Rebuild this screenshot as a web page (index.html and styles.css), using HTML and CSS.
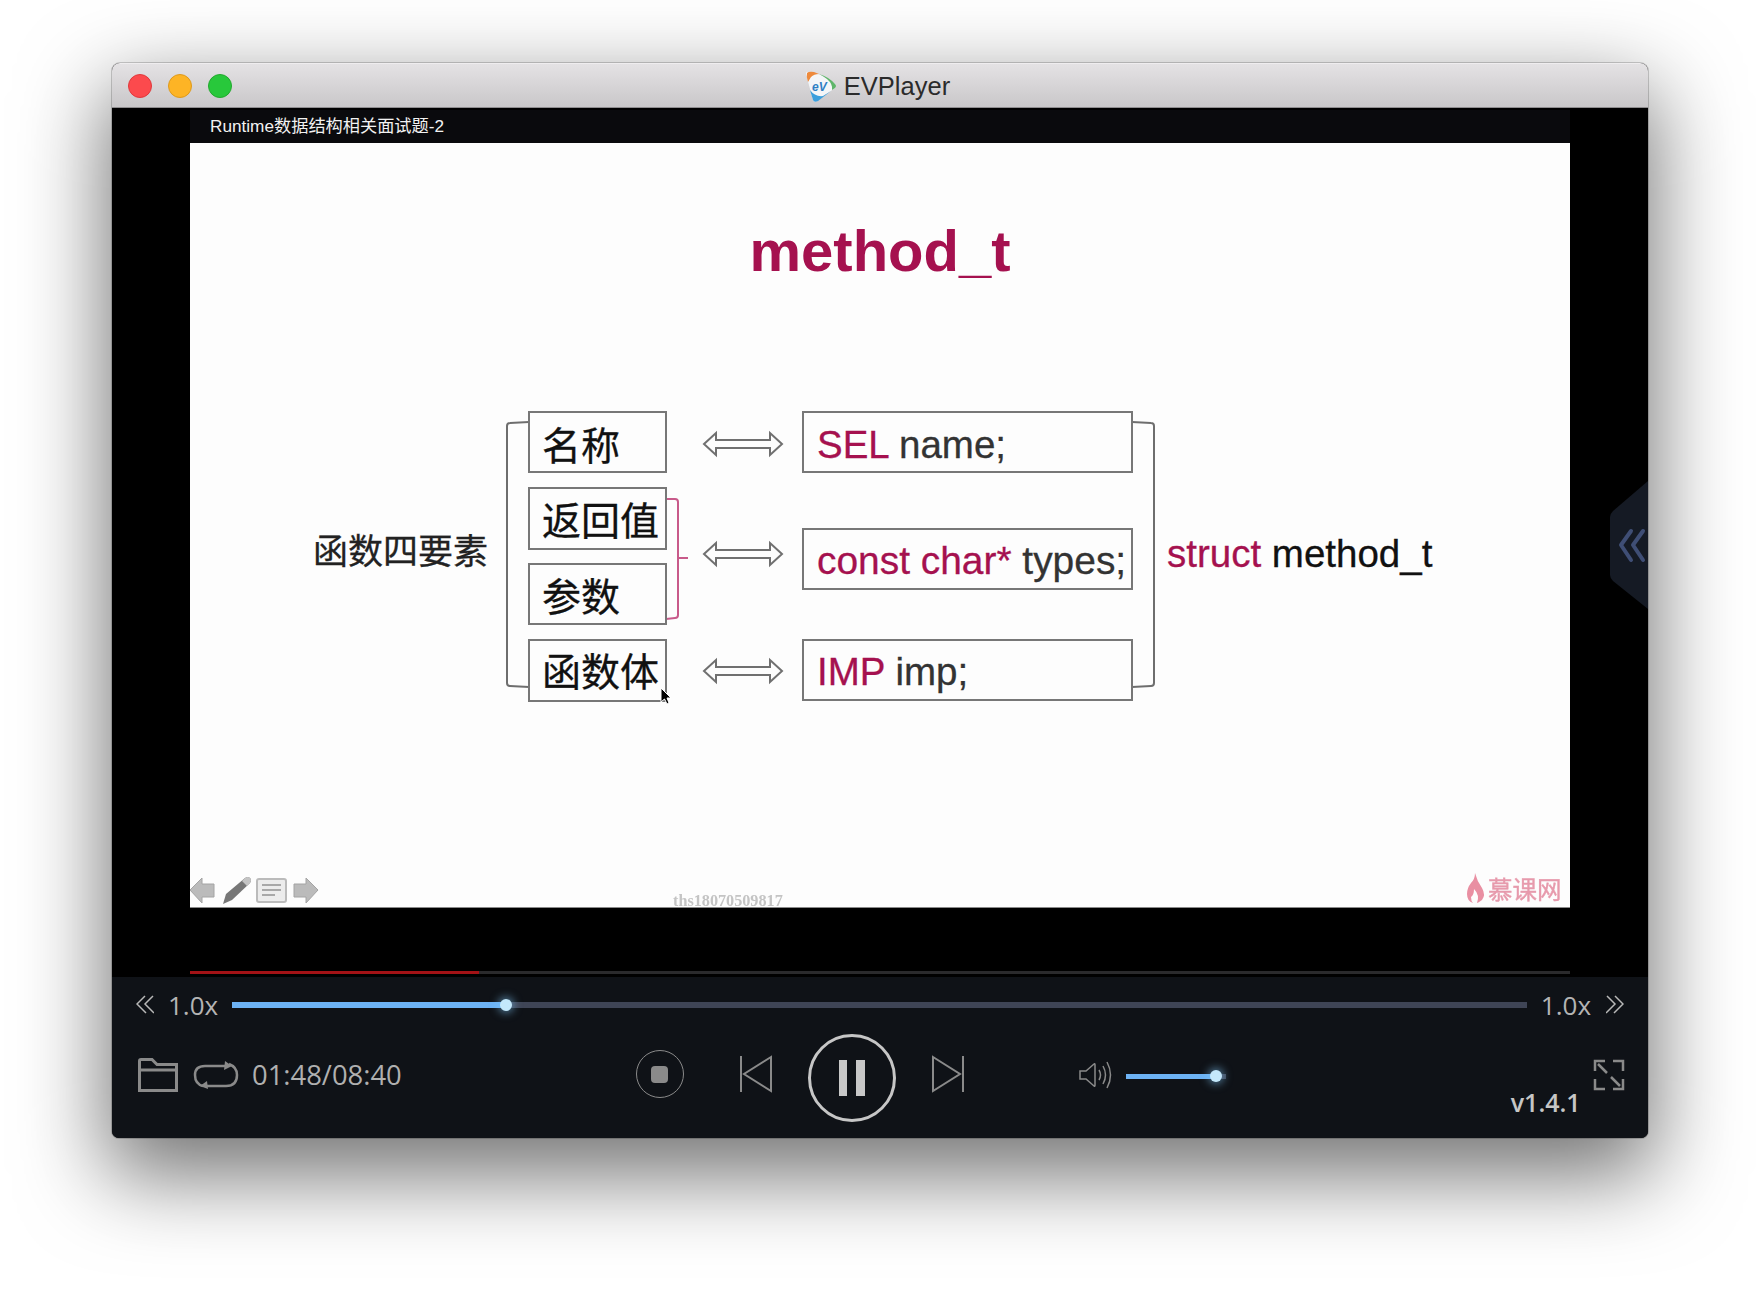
FILE: index.html
```html
<!DOCTYPE html>
<html>

<head>
	<meta charset="UTF-8" />
	<title>EVPlayer</title>
	<link rel="stylesheet" href="styles.css">
</head>

<body>
	<div class="window">

		<!-- title bar -->
		<div class="titlebar">
			<div class="lights">
				<span class="light red"></span>
				<span class="light yellow"></span>
				<span class="light green"></span>
			</div>
			<div class="app-name">
				<svg class="app-logo" width="32" height="33" viewBox="0 0 32 33">
					<path d="M3 2 Q1 1 1 4 L8 30 Q9 33 12 31 L30 18 Q32 16 30 14 Q18 3 3 2 Z" fill="#f4f6f8" />
					<path d="M2 3 Q1 7 3 12 L6 7 Q9 4 14 4 L9 2 Q4 1 2 3 Z" fill="#ee8a3c" />
					<path d="M14 4 Q24 7 30 14 Q32 16 30 18 L27 20 Q28 14 22 9 Q18 6 14 4 Z" fill="#5fb56a" />
					<path d="M8 30 L5 20 Q10 27 18 26 L26 21 L13 31 Q9 33 8 30 Z" fill="#3b9fdc" />
					<text class="logo-text" x="7" y="21">eV</text>
				</svg>
				<span>EVPlayer</span>
			</div>
		</div>

		<!-- video area -->
		<div class="video">
			<div class="lesson-title">Runtime数据结构相关面试题-2</div>
			<div class="slide">
				<h1 class="slide-title">method_t</h1>
				<svg class="diagram" width="1380" height="765" viewBox="0 0 1380 765">
					<!-- left brace -->
					<path class="line" d="M339 279 L320 280 Q317 280 317 283 L317 540 Q317 543 320 543 L339 544" />
					<path class="line pink" d="M476 356 L485 356 Q488 356 488 359 L488 472 Q488 475 485 475 L476 476 M488 415 L498 415" />
					<!-- right brace -->
					<path class="line" d="M942 279 L961 280 Q964 280 964 283 L964 540 Q964 543 961 543 L942 544" />

					<rect class="box" x="339" y="269" width="137" height="60" />
					<rect class="box" x="339" y="345" width="137" height="61" />
					<rect class="box" x="339" y="421" width="137" height="60" />
					<rect class="box" x="339" y="497" width="137" height="61" />
					<rect class="box" x="613" y="269" width="329" height="60" />
					<rect class="box" x="613" y="386" width="329" height="60" />
					<rect class="box" x="613" y="497" width="329" height="60" />

					<text class="cn small" x="123" y="421">函数四要素</text>
					<text class="cn" x="352" y="317">名称</text>
					<text class="cn" x="352" y="392">返回值</text>
					<text class="cn" x="352" y="468">参数</text>
					<text class="cn" x="352" y="543">函数体</text>

					<path class="arrow" d="M514 301 L526 290 L526 297 L580 297 L580 290 L592 301 L580 312 L580 305 L526 305 L526 312 Z" />
					<path class="arrow" d="M514 411 L526 400 L526 407 L580 407 L580 400 L592 411 L580 422 L580 415 L526 415 L526 422 Z" />
					<path class="arrow" d="M514 528 L526 517 L526 524 L580 524 L580 517 L592 528 L580 539 L580 532 L526 532 L526 539 Z" />

					<text class="code" x="627" y="315"><tspan class="kw">SEL</tspan> name;</text>
					<text class="code wide" x="627" y="431"><tspan class="kw">const char*</tspan> types;</text>
					<text class="code" x="627" y="542"><tspan class="kw">IMP</tspan> imp;</text>
					<text class="code dark" x="977" y="424"><tspan class="kw">struct</tspan> method_t</text>

					<!-- mouse pointer -->
					<path class="pointer" d="M471 545 L471 559 L474.500 556 L477 561 L479 560 L477 555 L481 555 Z" />

					<!-- slide player buttons -->
					<path class="tool" d="M0 747 L12 735 L12 741 L24 741 L24 754 L12 754 L12 760 Z" />
					<path class="pen" d="M33 761 L36 751 L55 735 Q58 733 60 735 Q62 737 60 740 L42 757 Z" />
					<path class="pen-tip" d="M55 735 Q58 733 60 735 Q62 737 60 740 L57 743 L52 738 Z" />
					<rect class="doc" x="67" y="736" width="29" height="23" rx="2" />
					<path class="doc-lines" d="M72 742 L91 742 M72 747 L91 747 M72 752 L85 752" />
					<path class="tool" d="M128 747 L116 735 L116 741 L104 741 L104 754 L116 754 L116 760 Z" />

					<text class="watermark" x="483" y="763">ths18070509817</text>

					<path class="flame" d="M1285 730 Q1287 738 1292 745 Q1296 752 1292 757 Q1288 760 1287 760 Q1290 752 1284 746 Q1284 752 1281 754 Q1281 758 1283 760 Q1277 758 1277 751 Q1277 745 1281 740 Q1285 736 1285 730 Z" />
					<text class="brand" x="1298" y="756">慕课网</text>
				</svg>
			</div>
			<div class="progress"><div class="progress-done" style="width: 289px"></div></div>

			<!-- collapsed playlist tab -->
			<svg class="side-tab" width="38" height="128" viewBox="0 0 38 128">
				<path d="M38 0 L38 128 L3 100 Q0 97 0 94 L0 36 Q0 33 3 30 Z" fill="#151a24" />
				<path d="M21 50 L11 64 L21 79 M33 50 L23 64 L33 79" fill="none" stroke="#3f4e75" stroke-width="4" stroke-linecap="round" stroke-linejoin="round" />
			</svg>
		</div>

		<!-- controls -->
		<div class="controls">
			<div class="speed-row">
				<svg class="chevrons" width="18" height="20" viewBox="0 0 18 20">
					<path d="M9 1 L1 9 L10 18 M17 1 L9 9 L18 18" />
				</svg>
				<span class="speed left">1.0x</span>
				<div class="seek">
					<div class="seek-fill" style="width: 274px"><span class="knob"></span></div>
				</div>
				<span class="speed right">1.0x</span>
				<svg class="chevrons" width="18" height="20" viewBox="0 0 18 20">
					<path d="M1 1 L9 9 L0 18 M9 1 L17 9 L8 18" />
				</svg>
			</div>

			<div class="button-row">
				<svg class="icon folder" width="40" height="34" viewBox="0 0 40 34">
					<path d="M1.500 32.500 L1.500 3 Q1.500 1.500 3 1.500 L14 1.500 L19 6.500 L38.500 6.500 L38.500 32.500 Z M1.500 12 L38.500 12" />
				</svg>
				<svg class="icon loop" width="44" height="28" viewBox="0 0 44 28">
					<path d="M9 25 Q1 23 1 14 Q1 5 11 5 L31 5 M35 3 Q43 6 43 14 Q43 25 32 25 L13 25" />
					<path class="solid" d="M31 0 L38 5 L30 9 Z M13 20 L6 25 L14 28 Z" />
				</svg>
				<span class="time">01:48/08:40</span>

				<button class="stop"><span class="stop-square"></span></button>
				<svg class="icon prev" width="32" height="36" viewBox="0 0 32 36">
					<path d="M1 0 L1 36 M31 1 L4 18 L31 35 Z" />
				</svg>
				<button class="pause"><span class="pause-bar"></span><span class="pause-bar"></span></button>
				<svg class="icon next" width="32" height="36" viewBox="0 0 32 36">
					<path d="M31 0 L31 36 M1 1 L28 18 L1 35 Z" />
				</svg>

				<svg class="icon speaker" width="33" height="28" viewBox="0 0 33 28">
					<path d="M1 10 L7 10 L15 3 Q16 2 16 4 L16 24 Q16 26 15 25 L7 18 L1 18 Z M20 9 Q23 14 20 19 M24 5 Q29 14 24 23 M28 1 Q35 14 28 27" />
				</svg>
				<div class="volume">
					<div class="volume-fill" style="width: 90px"><span class="knob"></span></div>
				</div>

				<span class="version">v1.4.1</span>
				<svg class="icon fullscreen" width="30" height="30" viewBox="0 0 30 30">
					<path d="M1 11 L1 1 L11 1 M19 1 L29 1 L29 11 M1 19 L1 29 L11 29 M29 19 L29 29 L19 29 M4 4 L13 13 M26 26 L17 17" />
				</svg>
			</div>
		</div>
	</div>
</body>

</html>
```

FILE: styles.css
```css
* {
	box-sizing: border-box;
}

html,
body {
	margin: 0;
	height: 1298px;
	overflow: hidden;
	background: #fff;
}

body {
	padding: 63px 112px 0;
	font-family: "Liberation Sans", "Noto Sans CJK SC", sans-serif;
}

.window {
	display: flex;
	flex-direction: column;
	width: 1536px;
	height: 1075px;
	border-radius: 8px 8px 7px 7px;
	background: #000;
	box-shadow: 0 0 0 1px rgba(0, 0, 0, .18), 0 32px 85px 6px rgba(0, 0, 0, .55);
	overflow: hidden;
}

/* title bar */
.titlebar {
	position: relative;
	display: flex;
	flex: none;
	align-items: center;
	justify-content: center;
	height: 45px;
	padding: 2px 5px 0 0;
	background: linear-gradient(#e4e2e4, #c9c7c9);
	border-top: 1px solid #efedef;
	border-bottom: 1px solid #8f8d8f;
}

.lights {
	position: absolute;
	left: 16px;
	top: 10px;
	display: flex;
	gap: 16px;
}

.light {
	width: 24px;
	height: 24px;
	border-radius: 50%;
}

.red {
	background: #fc4a4d;
	border: 1px solid #e0393c;
}

.yellow {
	background: #fdb425;
	border: 1px solid #de9a1c;
}

.green {
	background: #28c83b;
	border: 1px solid #22a92e;
}

.app-name {
	display: flex;
	align-items: center;
	gap: 7px;
	font-size: 25.500px;
	color: #2b2b2b;
}

.logo-text {
	font: italic bold 12px "Liberation Sans", sans-serif;
	fill: #2f7fc4;
}

/* video */
.video {
	position: relative;
	display: flex;
	flex: none;
	flex-direction: column;
	height: 869px;
	padding: 2px 78px 0;
	background: #000;
}

.lesson-title {
	flex: none;
	height: 33px;
	padding: 4px 0 0 20px;
	background: #0a0a0d;
	color: #f2f2f2;
	font-size: 17.200px;
	line-height: 24px;
	white-space: nowrap;
}

.slide {
	position: relative;
	flex: none;
	height: 765px;
	background: #fdfdfd;
	border-bottom: 1px solid #8a8a8a;
}

.slide-title {
	margin: 72px 0 0;
	text-align: center;
	color: #a5114f;
	font-size: 58px;
	line-height: 72px;
	font-weight: bold;
}

.diagram {
	position: absolute;
	left: 0;
	top: 0;
	overflow: visible;
}

.box {
	fill: none;
	stroke: #777;
	stroke-width: 2;
}

.line {
	fill: none;
	stroke: #6e6e6e;
	stroke-width: 2;
}

.pink {
	stroke: #c85a8a;
}

.arrow {
	fill: #fdfdfd;
	stroke: #707070;
	stroke-width: 2;
}

.cn {
	font-family: "Noto Sans CJK SC", sans-serif;
	font-size: 39px;
	fill: #111;
	stroke: #111;
	stroke-width: .3;
}

.cn.small {
	font-size: 35px;
	fill: #222;
	stroke: #222;
}

.code {
	font-family: "Liberation Sans", sans-serif;
	font-size: 38.500px;
	fill: #333;
	stroke: #333;
	stroke-width: .3;
}

.code.wide {
	font-size: 38.900px;
}

.code.dark {
	fill: #111;
	stroke: #111;
}

.kw {
	fill: #a5114f;
	stroke: #a5114f;
}

.pointer {
	fill: #000;
	stroke: #fff;
	stroke-width: 1;
}

.tool {
	fill: #bbb;
	stroke: #a4a4a4;
	stroke-width: 1;
}

.pen {
	fill: #777;
}

.pen-tip {
	fill: #c4c4c4;
}

.doc {
	fill: #ececec;
	stroke: #bbb;
	stroke-width: 2;
}

.doc-lines {
	stroke: #a8a8a8;
	stroke-width: 2;
}

.watermark {
	font-family: "Liberation Serif", serif;
	font-size: 16.200px;
	font-weight: bold;
	fill: #c4c4c4;
	filter: blur(.6px);
}

.flame {
	fill: #e98fa2;
}

.brand {
	font-family: "Noto Sans CJK SC", sans-serif;
	font-size: 24.500px;
	fill: #e79aac;
	stroke: #e79aac;
	stroke-width: .4;
	filter: blur(.3px);
}

.progress {
	flex: none;
	height: 3px;
	margin-top: 63px;
	background: #2a2a2c;
}

.progress-done {
	height: 3px;
	background: #a31216;
}

.side-tab {
	position: absolute;
	right: 0;
	top: 373px;
}

/* controls */
.controls {
	flex: none;
	height: 161px;
	padding: 0 24px 0 24px;
	background: #0f1217;
	color: #b4b4b4;
}

.speed-row {
	display: flex;
	align-items: center;
	height: 56px;
}

.chevrons path {
	fill: none;
	stroke: #b8b8b8;
	stroke-width: 1.500;
}

.speed {
	font-family: "Open Sans", sans-serif;
	font-size: 26px;
	line-height: 30px;
	white-space: nowrap;
}

.speed.left {
	margin: 0 14px 0 14px;
}

.speed.right {
	margin: 0 15px 0 14px;
}

.seek {
	flex: 1;
	height: 6px;
	background: #3f4556;
}

.seek-fill,
.volume-fill {
	position: relative;
	height: 100%;
	background: #6db3f5;
}

.knob {
	position: absolute;
	right: -6px;
	top: 50%;
	width: 12px;
	height: 12px;
	margin-top: -6px;
	border-radius: 50%;
	background: #c4e8fb;
	box-shadow: 0 0 8px 2px rgba(130, 200, 250, .55);
}

.button-row {
	display: flex;
	align-items: center;
	height: 88px;
	margin-top: 1px;
	padding-left: 2px;
}

.icon {
	flex: none;
	overflow: visible;
}

.icon path {
	fill: none;
	stroke: #8a8a8a;
	stroke-width: 2;
}

.icon path.solid {
	fill: #8a8a8a;
	stroke: none;
}

.folder {
	margin-bottom: 6px;
}

.folder path {
	stroke-width: 3;
}

.loop {
	margin: 0 0 6px 16px;
}

.loop path {
	stroke-width: 2.500;
}

.time {
	margin: 0 0 6px 14px;
	font-family: "Open Sans", sans-serif;
	font-size: 27.400px;
	line-height: 34px;
	white-space: nowrap;
	color: #b0b0b0;
}

button {
	flex: none;
	display: flex;
	align-items: center;
	justify-content: center;
	padding: 0;
	background: none;
	border-radius: 50%;
}

.stop {
	width: 48px;
	height: 48px;
	margin: 0 0 8px 234px;
	border: 1.500px solid #8a8a8a;
}

.stop-square {
	width: 17px;
	height: 17px;
	border-radius: 4px;
	background: #8a8a8a;
}

.prev {
	margin: 0 0 8px 56px;
}

.pause {
	gap: 9px;
	width: 88px;
	height: 88px;
	margin-left: 36px;
	border: 3px solid #c6c6c6;
}

.pause-bar {
	width: 8.500px;
	height: 36px;
	background: #c8c8c8;
}

.next {
	margin: 0 0 8px 36px;
}

.speaker {
	margin: 0 0 6px 115px;
}

.speaker path {
	stroke-width: 1.500;
}

.volume {
	width: 100px;
	height: 5px;
	margin: 0 0 4px 14px;
	background: #3f4556;
}

.version {
	margin: 47px 0 0 285px;
	font-family: "Open Sans", sans-serif;
	font-size: 25px;
	font-weight: 600;
	line-height: 30px;
	color: #c6c6c6;
	white-space: nowrap;
}

.fullscreen {
	margin: 0 0 6px 13px;
}

.fullscreen path {
	stroke-width: 2.500;
}
```
